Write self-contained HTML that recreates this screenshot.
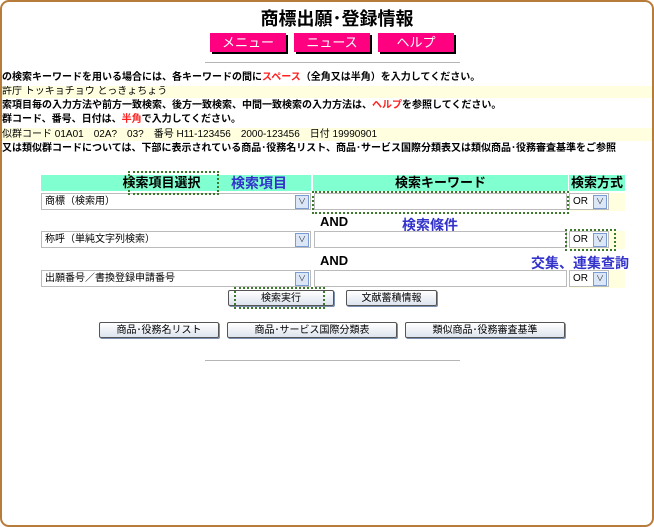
<!DOCTYPE html>
<html><head><meta charset="utf-8"><style>
body{margin:0;width:654px;height:527px;background:#fff;position:relative;overflow:hidden;font-family:"Liberation Sans","Noto Sans CJK JP",sans-serif;}
.frame{position:absolute;left:0;top:0;width:650px;height:523px;border:2px solid #b87c3a;border-radius:9px;}
.a{position:absolute;white-space:nowrap;}
.t{font-size:10px;color:#000;left:2px;height:14px;line-height:14px;overflow:hidden;width:650px;}
.pk{position:absolute;top:33px;height:19px;width:76px;background:#ff0080;color:#fff;font-size:13px;text-align:center;line-height:19px;box-shadow:2px 2px 0 #000;}
.hd{position:absolute;top:175px;height:16px;background:#80ffd0;font-size:13px;font-weight:bold;text-align:center;line-height:16px;}
.sel{position:absolute;height:17px;border:1px solid #bbb;background:#fff;font-size:10px;line-height:15px;padding-left:3px;box-sizing:border-box;}
.sel i{position:absolute;right:1px;top:1px;width:12px;height:12px;border:1px solid #7a9cd3;background:#dbe6f7;font-style:normal;font-size:8px;line-height:12px;text-align:center;color:#333;}
.inp{position:absolute;height:17px;border:1px solid #bbb;background:#fff;box-sizing:border-box;}
.yl{position:absolute;background:#ffffe0;}
.btn{position:absolute;height:16px;border:1px solid #555;border-radius:2px;background:linear-gradient(#fff,#dde4ee);font-size:10px;text-align:center;line-height:15px;box-sizing:border-box;box-shadow:1px 1px 0 #7b8fb0;}
.dot{position:absolute;border:2px dotted #3a7a2a;box-sizing:border-box;}
.bl{position:absolute;color:#3333cc;font-size:14px;font-weight:bold;white-space:nowrap;}
.hr{position:absolute;left:205px;width:255px;height:1px;background:#b5b5b5;}
.r{color:#ff2020}
</style></head><body>
<div class="frame"></div>
<div class="a" style="left:0;width:654px;text-align:center;top:5px;font-size:18px;font-weight:bold;">&nbsp;&nbsp;&nbsp;&nbsp;商標出願･登録情報</div>
<div class="pk" style="left:210px">メニュー</div>
<div class="pk" style="left:294px">ニュース</div>
<div class="pk" style="left:378px">ヘルプ</div>
<div class="hr" style="top:62px"></div>
<div class="a t" style="top:71px;font-weight:bold">の検索キーワードを用いる場合には、各キーワードの間に<span class="r">スペース</span>（全角又は半角）を入力してください。</div>
<div class="a t" style="top:86px;background:#ffffe0;height:12px;line-height:12px">許庁 トッキョチョウ とっきょちょう</div>
<div class="a t" style="top:99px;font-weight:bold">索項目毎の入力方法や前方一致検索、後方一致検索、中間一致検索の入力方法は、<span class="r">ヘルプ</span>を参照してください。</div>
<div class="a t" style="top:113px;font-weight:bold">群コード、番号、日付は、<span class="r">半角</span>で入力してください。</div>
<div class="a t" style="top:128px;background:#ffffe0;height:13px;line-height:13px">似群コード 01A01　02A?　03?　番号 H11-123456　2000-123456　日付 19990901</div>
<div class="a t" style="top:142px;font-weight:bold">又は類似群コードについては、下部に表示されている商品･役務名リスト、商品･サービス国際分類表又は類似商品･役務審査基準をご参照</div>

<div class="hd" style="left:41px;width:270px;">&nbsp;&nbsp;&nbsp;&nbsp;&nbsp;&nbsp;&nbsp;&nbsp;&nbsp;&nbsp;検索項目選択&nbsp;&nbsp;&nbsp;&nbsp;&nbsp;&nbsp;&nbsp;&nbsp;&nbsp;&nbsp;&nbsp;&nbsp;&nbsp;&nbsp;&nbsp;&nbsp;&nbsp;&nbsp;</div>
<div class="hd" style="left:313px;width:255px;">検索キーワード</div>
<div class="hd" style="left:569px;width:56px;">検索方式</div>
<div class="bl" style="left:231px;top:173px">検索項目</div>

<div class="yl" style="left:569px;top:193px;width:56px;height:18px"></div>
<div class="sel" style="left:41px;top:193px;width:270px">商標（検索用）<i>∨</i></div>
<div class="inp" style="left:314px;top:193px;width:253px"></div>
<div class="sel" style="left:569px;top:193px;width:40px">OR<i>∨</i></div>

<div class="a" style="left:320px;top:214px;font-size:13px;font-weight:bold">AND</div>
<div class="bl" style="left:402px;top:215px">検索條件</div>

<div class="yl" style="left:569px;top:231px;width:56px;height:18px"></div>
<div class="sel" style="left:41px;top:231px;width:270px">称呼（単純文字列検索）<i>∨</i></div>
<div class="inp" style="left:314px;top:231px;width:253px"></div>
<div class="sel" style="left:569px;top:231px;width:40px">OR<i>∨</i></div>

<div class="a" style="left:320px;top:253px;font-size:13px;font-weight:bold">AND</div>
<div class="bl" style="left:531px;top:253px">交集、連集查詢</div>

<div class="yl" style="left:569px;top:270px;width:56px;height:18px"></div>
<div class="sel" style="left:41px;top:270px;width:270px">出願番号／書換登録申請番号<i>∨</i></div>
<div class="inp" style="left:314px;top:270px;width:253px"></div>
<div class="sel" style="left:569px;top:270px;width:40px">OR<i>∨</i></div>

<div class="btn" style="left:228px;top:290px;width:106px">検索実行</div>
<div class="btn" style="left:346px;top:290px;width:91px">文献蓄積情報</div>
<div class="btn" style="left:99px;top:322px;width:120px">商品･役務名リスト</div>
<div class="btn" style="left:227px;top:322px;width:170px">商品･サービス国際分類表</div>
<div class="btn" style="left:405px;top:322px;width:160px">類似商品･役務審査基準</div>

<div class="dot" style="left:128px;top:171px;width:91px;height:24px"></div>
<div class="dot" style="left:312px;top:191px;width:257px;height:23px"></div>
<div class="dot" style="left:565px;top:229px;width:51px;height:22px"></div>
<div class="dot" style="left:234px;top:287px;width:91px;height:22px"></div>

<div class="hr" style="top:360px"></div>
</body></html>
